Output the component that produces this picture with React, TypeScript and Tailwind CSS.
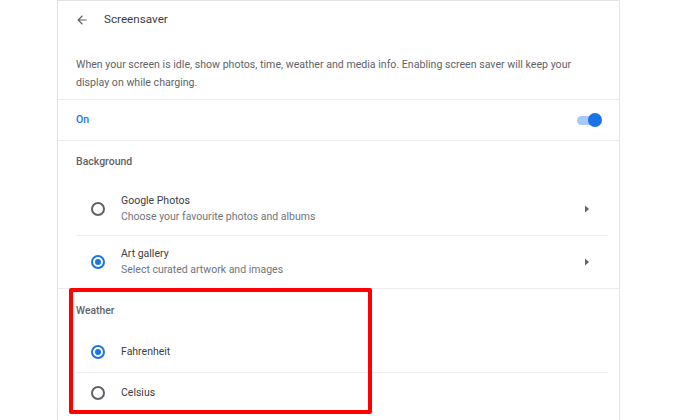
const Radio = ({ checked }: { checked: boolean }) =>
  checked ? (
    <span className="flex h-[14px] w-[14px] shrink-0 items-center justify-center rounded-full border-2 border-[#1a73e8]">
      <span className="h-[6px] w-[6px] rounded-full bg-[#1a73e8]" />
    </span>
  ) : (
    <span className="block h-[14px] w-[14px] shrink-0 rounded-full border-2 border-[#5f6368]" />
  );

const Arrow = () => (
  <svg width="6" height="10" viewBox="0 0 6 10" className="text-[#5f6368]">
    <path d="M1 1.5 L5 5 L1 8.5 Z" fill="currentColor" />
  </svg>
);

const App = () => {
  return (
    <div className="h-[420px] w-[675px] overflow-hidden bg-white font-['Roboto',sans-serif]">
      <div className="ml-[57px] min-h-[420px] w-[563px] border-x border-t border-[#e3e3e3]">
        {/* Header */}
        <div className="flex h-[38px] items-center pl-[17px]">
          <svg width="14" height="14" viewBox="0 0 24 24" className="text-[#5f6368]">
            <path d="M20 11H7.83l5.59-5.59L12 4l-8 8 8 8 1.41-1.41L7.83 13H20v-2z" fill="currentColor" />
          </svg>
          <span className="ml-[15px] text-[11.7px] text-[#3c4043]">Screensaver</span>
        </div>

        {/* Description */}
        <div className="px-[18px] pt-[17px] pb-[7px] text-[10.6px] leading-[18px] text-[#5f6368]">
          When your screen is idle, show photos, time, weather and media info. Enabling screen saver will keep your display on while charging.
        </div>

        {/* On toggle */}
        <div className="flex h-[41px] items-center justify-between border-t border-[#ececec] pl-[18px] pr-[17px]">
          <span className="text-[10.5px] font-medium text-[#1a73e8]">On</span>
          <span className="relative flex h-[14px] w-[25px] items-center">
            <span className="h-[9px] w-[22px] rounded-full bg-[#a8c7fa]" />
            <span className="absolute right-0 h-[14px] w-[14px] rounded-full bg-[#1a73e8]" />
          </span>
        </div>

        {/* Background */}
        <div className="border-t border-[#ececec]">
          <div className="flex h-[41px] items-center px-[18px] text-[10.5px] font-medium text-[#5f6368]">Background</div>
          <div className="ml-[18px] mr-[11px]">
            <div className="flex h-[54px] items-center border-b border-[#ececec]">
              <span className="ml-[15px]"><Radio checked={false} /></span>
              <div className="ml-[16px] flex-1">
                <div className="text-[10.5px] leading-[16px] text-[#3c4043]">Google Photos</div>
                <div className="text-[10.5px] leading-[16px] text-[#70757a]">Choose your favourite photos and albums</div>
              </div>
              <span className="mr-[18px]"><Arrow /></span>
            </div>
            <div className="flex h-[52px] items-center">
              <span className="ml-[15px]"><Radio checked /></span>
              <div className="ml-[16px] flex-1">
                <div className="text-[10.5px] leading-[16px] text-[#3c4043]">Art gallery</div>
                <div className="text-[10.5px] leading-[16px] text-[#70757a]">Select curated artwork and images</div>
              </div>
              <span className="mr-[18px]"><Arrow /></span>
            </div>
          </div>
        </div>

        {/* Weather */}
        <div className="relative border-t border-[#ececec]">
          <div className="flex h-[43px] items-center px-[18px] text-[10.3px] font-medium text-[#5f6368]">Weather</div>
          <div className="ml-[18px] mr-[11px]">
            <div className="flex h-[41px] items-center border-b border-[#ececec]">
              <span className="ml-[15px]"><Radio checked /></span>
              <span className="ml-[16px] text-[10.5px] text-[#3c4043]">Fahrenheit</span>
            </div>
            <div className="flex h-[40px] items-center">
              <span className="ml-[15px]"><Radio checked={false} /></span>
              <span className="ml-[16px] text-[10.5px] text-[#3c4043]">Celsius</span>
            </div>
          </div>
          <div className="pointer-events-none absolute left-[11px] top-[-1px] h-[126px] w-[303px] rounded-[2px] border-[4px] border-[#ff0000]" />
        </div>
      </div>
    </div>
  );
};

export default App;
